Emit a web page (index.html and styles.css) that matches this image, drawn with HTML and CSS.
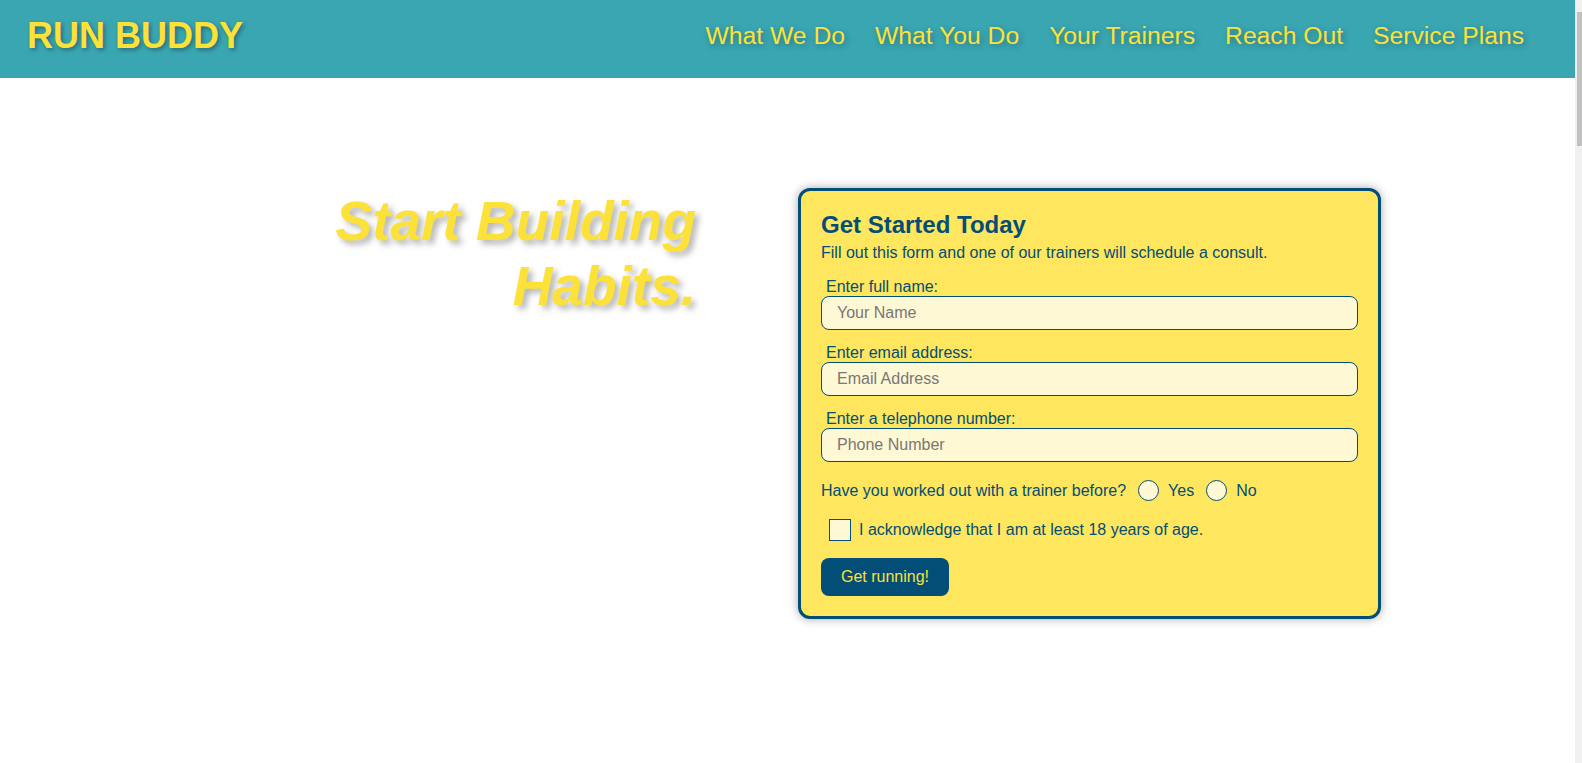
FILE: index.html
```html
<!DOCTYPE html>
<html lang="en">
<head>
<meta charset="UTF-8">
<title>Run Buddy</title>
<link rel="stylesheet" href="styles.css">
</head>
<body>
<header class="site-header">
  <h1 class="logo">RUN BUDDY</h1>
  <nav class="main-nav">
    <a href="#what-we-do">What We Do</a>
    <a href="#what-you-do">What You Do</a>
    <a href="#your-trainers">Your Trainers</a>
    <a href="#reach-out">Reach Out</a>
    <a href="#service-plans">Service Plans</a>
  </nav>
</header>
<section class="hero">
  <div class="hero-cta">
    <h2>Start Building<br>Habits.</h2>
  </div>
  <form class="hero-form">
    <h3>Get Started Today</h3>
    <p class="form-intro">Fill out this form and one of our trainers will schedule a consult.</p>
    <label class="field-label" for="name">Enter full name:</label>
    <input class="text-input" id="name" type="text" placeholder="Your Name">
    <label class="field-label" for="email">Enter email address:</label>
    <input class="text-input" id="email" type="email" placeholder="Email Address">
    <label class="field-label" for="phone">Enter a telephone number:</label>
    <input class="text-input" id="phone" type="tel" placeholder="Phone Number">
    <div class="radio-row">
      <span>Have you worked out with a trainer before?</span>
      <label class="choice"><input class="radio" type="radio" name="trainer"> Yes</label>
      <label class="choice"><input class="radio" type="radio" name="trainer"> No</label>
    </div>
    <label class="check-row"><input class="checkbox" type="checkbox"> I acknowledge that I am at least 18 years of age.</label>
    <button class="submit-btn" type="submit">Get running!</button>
  </form>
</section>
<section class="next-section"></section>
<div class="fake-scrollbar" aria-hidden="true"><div class="fake-thumb"></div></div>
</body>
</html>
```
FILE: styles.css
```css
* {
  box-sizing: border-box;
}

body {
  margin: 0 7px 0 0;
  font-family: "Liberation Sans", Arial, sans-serif;
  background: #ffffff;
}

.site-header {
  display: flex;
  justify-content: space-between;
  align-items: center;
  background-color: #39a6b2;
  padding: 15px 36px 21px 27px;
}

.logo {
  margin: 0;
  font-size: 36px;
  font-weight: bold;
  color: #fce138;
  text-shadow: 2px 2px 4px rgba(0, 0, 0, 0.35);
}

.main-nav {
  display: flex;
}

.main-nav a {
  margin: 0 15px;
  font-size: 24.7px;
  color: #fce138;
  text-decoration: none;
  text-shadow: 2px 2px 6px rgba(0, 0, 0, 0.3);
}

.hero {
  display: grid;
  grid-template-columns: 696px 583px;
  column-gap: 102px;
  align-items: start;
  height: 685px;
  padding-top: 110px;
}

.hero-cta h2 {
  margin: 1px 0 0;
  text-align: right;
  font-size: 55px;
  line-height: 65px;
  font-style: italic;
  font-weight: bold;
  color: #fce138;
  text-shadow: 4px 4px 6px rgba(0, 0, 0, 0.3);
}

.hero-form {
  display: flex;
  flex-direction: column;
  align-items: flex-start;
  background-color: #fee65f;
  border: 3px solid #024e76;
  border-radius: 12px;
  box-shadow: 0 0 10px rgba(0, 0, 0, 0.35);
  padding: 20px;
  color: #024e76;
}

.hero-form h3 {
  margin: 0;
  font-size: 24px;
}

.form-intro {
  margin: 5px 0 16px;
  font-size: 16px;
}

.field-label {
  font-size: 16px;
  padding-left: 5px;
}

.text-input {
  width: 100%;
  margin: 0 0 14px;
  padding: 7px 15px;
  font-family: inherit;
  font-size: 16px;
  background-color: #fff8d4;
  border: 1px solid #024e76;
  border-radius: 8px;
  color: #024e76;
}

.text-input::placeholder {
  color: #777777;
}

.radio-row {
  display: flex;
  align-items: center;
  font-size: 16px;
  margin-top: 4px;
}

.choice {
  display: flex;
  align-items: center;
  margin-left: 12px;
}

.radio {
  appearance: none;
  width: 21px;
  height: 21px;
  margin: 0 9px 0 0;
  border: 1px solid #024e76;
  border-radius: 50%;
  background-color: #fff8d4;
}

.check-row {
  display: flex;
  align-items: center;
  margin: 18px 0 0 8px;
  font-size: 16px;
}

.checkbox {
  appearance: none;
  width: 22px;
  height: 22px;
  margin: 0 8px 0 0;
  border: 1px solid #024e76;
  background-color: #fff8d4;
}

.submit-btn {
  margin-top: 17px;
  padding: 9px 20px;
  font-family: inherit;
  font-size: 16px;
  line-height: 20px;
  color: #fce138;
  background-color: #024e76;
  border: none;
  border-radius: 8px;
}

.next-section {
  height: 3300px;
  background: linear-gradient(to right, #e2dcef, #c9f1e4);
}

.fake-scrollbar {
  position: fixed;
  top: 0;
  right: 0;
  width: 7px;
  height: 100vh;
  background-color: #f0f0f0;
}

.fake-thumb {
  margin: 12px 0 0 2px;
  width: 5px;
  height: 134px;
  background-color: #c1c1c1;
}
```
